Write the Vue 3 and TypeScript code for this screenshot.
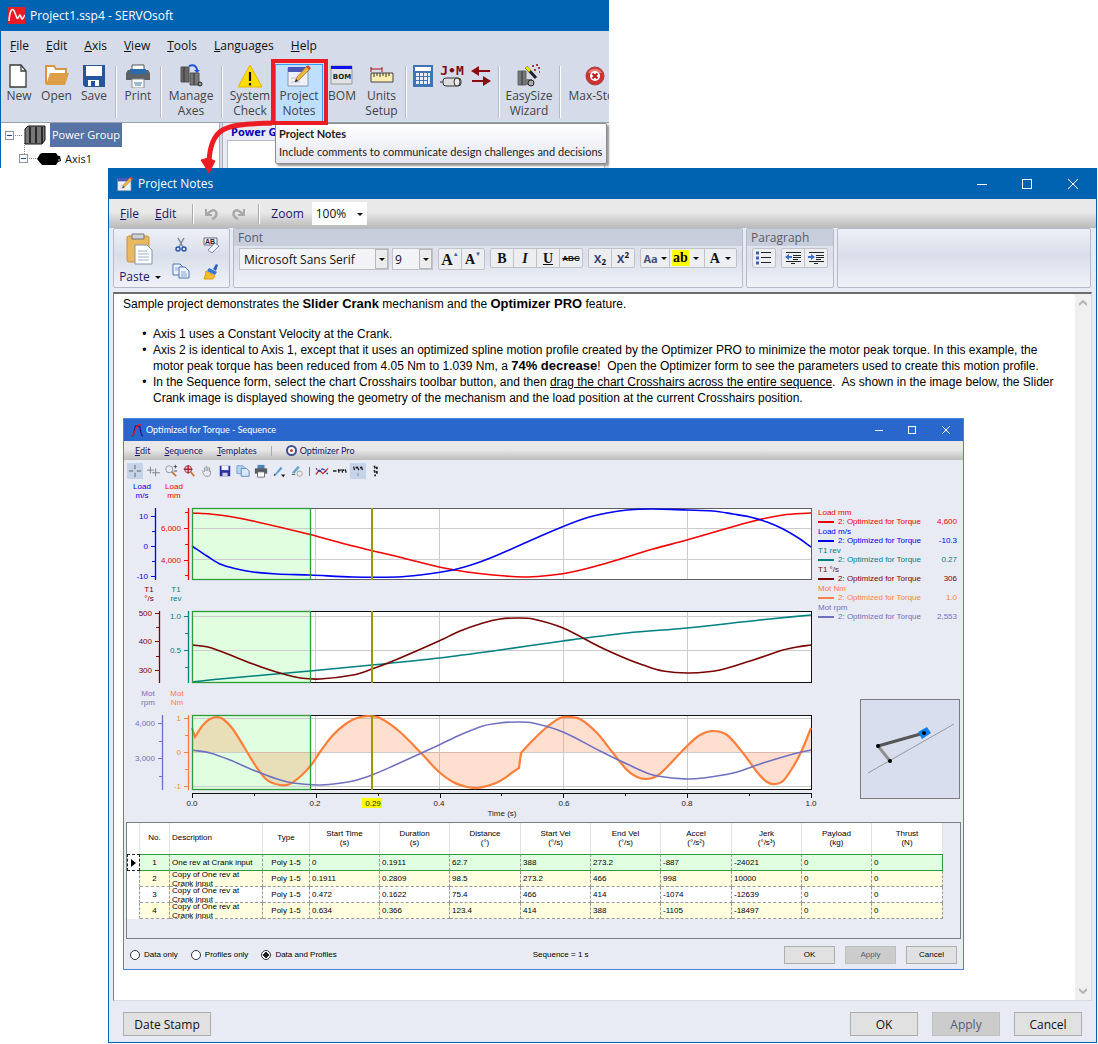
<script setup lang="ts">
import { ref } from 'vue'

interface Tool { label: string[]; icon: string; width: number; sep?: boolean; active?: boolean }
interface Axis { x: number; top: number; bottom: number; color: string; title: [string, string]; titleX: number; ticks: [number, string][] }
type Point = [number, number]

const notesIcon = '<path d="M1 4h20v18H1z" fill="#eef1f8" stroke="#8d93a8"/><path d="M1 3h20v5H1z" fill="#4c55b8"/><path d="M4 18h9M4 14h6" stroke="#b9c0d4"/><path d="M8 18l2-5L20 2l3 3-11 11z" fill="#f0b63c" stroke="#8b7545" stroke-width="0.700"/><path d="M19 3l2-2 3 3-2 2z" fill="#d44a3a"/><path d="M8 18l1-3 2 2z" fill="#222"/>'

const tools: Tool[] = [
  { label: ['New'], width: 36, icon: '<path d="M3 1h11l5 6v16H3z" fill="#fff" stroke="#3b3b3b" stroke-width="1.300"/><path d="M14 1v6h5" fill="none" stroke="#3b3b3b" stroke-width="1.300"/>' },
  { label: ['Open'], width: 39, icon: '<path d="M1 20V2h8l2 3h10v4" fill="#fff" stroke="#d9963c" stroke-width="2"/><path d="M1 21L5 9h19l-4 12z" fill="#dc9f48"/>' },
  { label: ['Save'], width: 36, icon: '<path d="M1 1h22v22H3l-2-2z" fill="#24559d"/><path d="M4 2h16v10H4z" fill="#fff"/><path d="M6 16h11v6H6z" fill="#fff"/><path d="M9 17h4v5H9z" fill="#24559d"/>', sep: true },
  { label: ['Print'], width: 38, icon: '<path d="M6 1h12v5H6z" fill="#fff" stroke="#555"/><path d="M2 6h20l2 3v7H0V9z" fill="#5c6168"/><path d="M4 5h16v5H4z" fill="#2a6bab"/><path d="M6 15h12v9H6z" fill="#fff" stroke="#888"/><path d="M8 19h8M9 21h6" stroke="#3a76ae"/>', sep: true },
  { label: ['Manage', 'Axes'], width: 54, icon: '<path d="M2 3h8v15H2z" fill="#666" stroke="#555"/><path d="M5 3v15" stroke="#333"/><path d="M11 9h9v12h-9z" fill="#777" stroke="#555"/><path d="M15 9v12" stroke="#333"/><circle cx="21" cy="20" r="2" fill="#999" stroke="#222"/><path d="M10 2c6-2 8 1 8 5" fill="none" stroke="#1e50d8" stroke-width="2"/><path d="M15 6h6l-3 3z" fill="#1e50d8"/>', sep: true },
  { label: ['System', 'Check'], width: 50, icon: '<path d="M12 1l12 22H0z" fill="#ffdd00" stroke="#e2b900"/><path d="M12 8v9M12 19v2.500" stroke="#111" stroke-width="2.200"/>' },
  { label: ['Project', 'Notes'], width: 48, icon: notesIcon, active: true },
  { label: ['BOM'], width: 38, icon: '<path d="M1 2h21v18H1z" fill="#e2e2e2" stroke="#999"/><path d="M1 2h21v3H1z" fill="#1111f0"/><text x="12" y="15" text-anchor="middle" font-family="DejaVu Sans" font-weight="bold" font-size="7" fill="#222">BOM</text>' },
  { label: ['Units', 'Setup'], width: 41, icon: '<path d="M1 3v5M12 3v5M1 5h11" stroke="#a31414" fill="none"/><path d="M1 9h22v9H1z" fill="#fdeeb0" stroke="#444"/><path d="M4 9v4M7 9v3M10 9v4M13 9v3M16 9v4M19 9v3" stroke="#333"/>', sep: true },
  { label: [], width: 28, icon: '<path d="M2 1h20v22H2z" fill="#3f73b3"/><path d="M4 3h16v4H4z" fill="#fff"/><path d="M5 9h3v3H5zM9 9h3v3H9zM13 9h3v3h-3zM17 9h2v3h-2zM5 13h3v3H5zM9 13h3v3H9zM13 13h3v3h-3zM17 13h2v7h-2zM5 17h3v3H5zM9 17h3v3H9zM13 17h3v3h-3z" fill="#e6eefb"/>' },
  { label: [], width: 30, icon: '<text x="12" y="11" text-anchor="middle" font-family="DejaVu Sans Mono" font-weight="bold" font-size="13" fill="#7d0b12">J•M</text><rect x="3" y="14" width="18" height="8" rx="3" fill="#ddd" stroke="#333"/><ellipse cx="17" cy="18" rx="3" ry="4" fill="#eee" stroke="#333"/><path d="M0 18h3" stroke="#333"/>' },
  { label: [], width: 28, icon: '<path d="M2 7l8-5v4h11v2H10v4zM22 17l-8-5v4H3v2h11v4z" fill="#8a0c10"/>', sep: true },
  { label: ['EasySize', 'Wizard'], width: 54, icon: '<path d="M1 7h8v14H1z" fill="#777" stroke="#666"/><path d="M5 7v14" stroke="#333"/><path d="M9 15h6v6H9z" fill="#777"/><circle cx="14" cy="19" r="3" fill="#aaa" stroke="#222"/><path d="M9 3l10 11" stroke="#222" stroke-width="3"/><path d="M9 3l4 4" stroke="#f5e400" stroke-width="2.500"/><path d="M15 2h2M19 1h2M21 4h2M17 6h2M22 8h1" stroke="#8a1010" stroke-width="1.500"/>', sep: true },
  { label: ['Max-Stop'], width: 64, icon: '<circle cx="12" cy="12" r="9" fill="#cf3030" stroke="#a04040"/><path d="M5 9a8 8 0 0 1 14 0z" fill="#ea7b74"/><circle cx="12" cy="12" r="5" fill="#fff"/><path d="M9.500 9.500l5 5M14.500 9.500l-5 5" stroke="#b61f1f" stroke-width="2.200"/>' },
]

const menus = ['File', 'Edit', 'Axis', 'View', 'Tools', 'Languages', 'Help']

const seqTools: { icon: string; name: string; on?: boolean; bar?: boolean }[] = [
  { name: 'Crosshairs', on: true, icon: '<path d="M8 1v5M8 10v5M1 8h5M10 8h5" stroke="#555"/>' },
  { name: 'Double crosshairs', icon: '<path d="M5 3v8M1 7h8M11 5v9M7 10h9" stroke="#777"/>' },
  { name: 'Zoom', icon: '<circle cx="6" cy="6" r="4" fill="#e5edf7" stroke="#8490a3"/><path d="M9 9l5 5" stroke="#c6742c" stroke-width="2"/><path d="M11 3h4M13 1v4M11 8h4" stroke="#444"/>' },
  { name: 'Zoom to fit', icon: '<circle cx="7" cy="6" r="4" fill="#ecd5dc" stroke="#9b2431"/><path d="M10 9l4 5" stroke="#c6742c" stroke-width="2"/><path d="M7 1v10M2 6h10" stroke="#b01f2c" stroke-width="1.500"/>' },
  { name: 'Pan', icon: '<path d="M4 9L2 7M5 9V4M7 8V2M9 8V3M11 9V4M3 9c1 4 3 5 4 5h3c2 0 2-3 2-6" fill="none" stroke="#8b8b8b"/>' },
  { name: 'Save', icon: '<path d="M2 2h12v12H2z" fill="#2b2fa5"/><path d="M4 2h8v5H4z" fill="#f3f3ff"/><path d="M5 10h6v4H5z" fill="#ccd"/>' },
  { name: 'Copy', icon: '<path d="M1 2h7l2 2v7H1z" fill="#b8d2f0" stroke="#6f9ccc"/><path d="M6 5h6l3 3v6H6z" fill="#dce8f8" stroke="#4f80ba"/>' },
  { name: 'Print', icon: '<path d="M4 1h8v5H4z" fill="#4a86bd"/><path d="M1 5h14v6H1z" fill="#555b63"/><path d="M4 9h8v6H4z" fill="#fff" stroke="#666"/>' },
  { name: 'Line', icon: '<path d="M2 13L10 3l2 2-8 8z" fill="#5c9bd1"/><path d="M2 13l1-2 1 2z" fill="#222"/><path d="M10 12h5l-2 3z" fill="#222"/>' },
  { name: 'Fill', icon: '<path d="M2 10L9 2l2 2-6 7z" fill="#6aa3d2"/><path d="M2 12h4" stroke="#555"/><circle cx="11" cy="11" r="3" fill="#eee" stroke="#999"/>', bar: true },
  { name: 'Curves', icon: '<path d="M1 12l4-5 4 4 6-6" fill="none" stroke="#d02222" stroke-width="1.500"/><path d="M1 5l4 4 4-4 6 7" fill="none" stroke="#2030a0" stroke-dasharray="2 1" stroke-width="1.500"/>' },
  { name: 'Join', icon: '<path d="M0 8h4M6 6l1 4M8 6v2M10 6l1 4M12 6v2M14 6l1 4" fill="none" stroke="#222" stroke-width="1.500"/>' },
  { name: 'Split', on: true, icon: '<path d="M3 3l1 4M6 3v2M7 3l2 4M11 3v2M12 3l1 4" fill="none" stroke="#222" stroke-width="1.500"/><path d="M8 10v4" stroke="#888"/>' },
  { name: 'Stack', icon: '<path d="M6 2l1 3M9 3v3M6 7l1 3M9 8v3M7 12v2" fill="none" stroke="#222" stroke-width="2"/>' },
]

const axes: Axis[] = [
  { x: 155, top: 508, bottom: 579, color: '#0000f0', title: ['Load', 'm/s'], titleX: 142, ticks: [[516, '10'], [531, ''], [546, '0'], [561, ''], [576, '-10']] },
  { x: 188, top: 508, bottom: 579, color: '#f00000', title: ['Load', 'mm'], titleX: 174, ticks: [[512, ''], [528, '6,000'], [544, ''], [560, '4,000'], [575, '']] },
  { x: 159, top: 611, bottom: 682, color: '#800000', title: ['T1', '°/s'], titleX: 149, ticks: [[613, '500'], [627, ''], [641, '400'], [656, ''], [670, '300']] },
  { x: 188, top: 611, bottom: 682, color: '#008080', title: ['T1', 'rev'], titleX: 176, ticks: [[616, '1.0'], [633, ''], [650, '0.5'], [667, '']] },
  { x: 162, top: 715, bottom: 789, color: '#7070c0', title: ['Mot', 'rpm'], titleX: 148, ticks: [[723, '4,000'], [741, ''], [758, '3,000'], [776, '']] },
  { x: 188, top: 715, bottom: 789, color: '#ff7f40', title: ['Mot', 'Nm'], titleX: 177, ticks: [[718, '1'], [735, ''], [752, '0'], [769, ''], [786, '-1']] },
]

const plots = [
  { top: 508, height: 71, edge: '#606060', lines: [528, 559] },
  { top: 611, height: 71, edge: '#101010', lines: [616, 650] },
  { top: 715, height: 74, edge: '#101010', lines: [718, 752, 786] },
]

const torquePts: Point[] = [[195, 737], [203, 725], [210, 719], [217, 717], [223, 719], [232, 728], [243, 745], [255, 765], [267, 780], [280, 785], [290, 784], [302, 775], [312, 764], [320, 752], [333, 735], [347, 723], [357, 718], [368, 716], [380, 718], [400, 732], [421, 753], [439, 772], [453, 782], [467, 787], [477, 788], [487, 786], [500, 781], [513, 772], [519, 768]]
const torquePts2: Point[] = [[521, 753], [533, 740], [547, 727], [560, 718], [570, 717], [580, 719], [597, 733], [613, 753], [627, 770], [637, 777], [647, 779], [657, 776], [670, 764], [687, 746], [700, 735], [713, 731], [727, 735], [743, 753], [757, 772], [767, 782], [775, 784], [783, 781], [793, 767], [802, 750], [811, 728]]

const curves: { color: string; pts: Point[] }[] = [
  { color: '#f40000', pts: [[192, 513], [210, 514], [227, 516], [253, 521], [308, 534], [353, 546], [403, 558], [439, 567], [467, 572], [493, 575], [523, 577], [543, 576], [567, 573], [600, 565], [653, 549], [687, 540], [750, 522], [783, 515], [811, 513]] },
  { color: '#0000f4', pts: [[192, 546], [207, 556], [220, 564], [237, 569], [253, 572], [277, 574], [310, 575], [353, 577], [397, 577], [420, 575], [453, 570], [477, 563], [500, 554], [550, 532], [583, 519], [607, 513], [627, 510], [652, 509], [687, 510], [713, 511], [733, 514], [750, 517], [767, 522], [783, 529], [800, 539], [811, 547]] },
  { color: '#008080', pts: [[192, 682], [220, 679], [310, 671], [372, 665], [439, 658], [500, 650], [563, 641], [627, 633], [687, 628], [760, 620], [811, 615]] },
  { color: '#780000', pts: [[192, 645], [208, 647], [220, 651], [253, 664], [270, 670], [287, 675], [300, 678], [320, 679], [353, 675], [372, 669], [393, 661], [439, 641], [460, 631], [483, 623], [500, 619], [517, 618], [533, 619], [563, 628], [600, 647], [627, 659], [643, 665], [663, 671], [690, 673], [720, 670], [750, 661], [783, 650], [797, 647], [811, 645]] },
  { color: '#7070c0', pts: [[192, 750], [210, 753], [230, 760], [253, 770], [277, 779], [293, 783], [317, 785], [333, 784], [353, 781], [372, 775], [393, 766], [439, 745], [460, 735], [483, 726], [500, 723], [517, 722], [533, 723], [563, 732], [600, 751], [627, 764], [653, 775], [687, 779], [703, 778], [733, 773], [763, 763], [797, 753], [811, 750]] },
]

// Cubic Hermite curve through unevenly spaced samples.
function smooth(pts: Point[], start = 'M'): string {
  const slopes = pts.map((_, i) => {
    const a = pts[Math.max(i - 1, 0)], b = pts[Math.min(i + 1, pts.length - 1)]
    return (b[1] - a[1]) / (b[0] - a[0])
  })
  let d = `${start}${pts[0][0]} ${pts[0][1]}`
  for (let i = 0; i < pts.length - 1; i++) {
    const b = pts[i], c = pts[i + 1], h = (c[0] - b[0]) / 3
    d += `C${b[0] + h} ${b[1] + slopes[i] * h} ${c[0] - h} ${c[1] - slopes[i + 1] * h} ${c[0]} ${c[1]}`
  }
  return d
}
const torque = 'M192 728' + smooth(torquePts, 'L') + smooth(torquePts2, 'L')

const legend = [
  { name: 'Load mm', value: '4,600', color: '#f00000' },
  { name: 'Load m/s', value: '-10.3', color: '#0000f0' },
  { name: 'T1 rev', value: '0.27', color: '#008080' },
  { name: 'T1 °/s', value: '306', color: '#800000' },
  { name: 'Mot Nm', value: '1.0', color: '#ff7f40' },
  { name: 'Mot rpm', value: '2,553', color: '#7070c0' },
]

const columns: [string, string, number][] = [
  ['', '', 13], ['No.', '', 30], ['Description', '', 93], ['Type', '', 47], ['Start Time', '(s)', 70], ['Duration', '(s)', 70],
  ['Distance', '(°)', 71], ['Start Vel', '(°/s)', 70], ['End Vel', '(°/s)', 70], ['Accel', '(°/s²)', 71], ['Jerk', '(°/s³)', 70],
  ['Payload', '(kg)', 70], ['Thrust', '(N)', 71],
]
const rows = [
  ['1', 'One rev at Crank input', 'Poly 1-5', '0', '0.1911', '62.7', '388', '273.2', '-887', '-24021', '0', '0'],
  ['2', 'Copy of One rev at Crank input', 'Poly 1-5', '0.1911', '0.2809', '98.5', '273.2', '466', '998', '10000', '0', '0'],
  ['3', 'Copy of One rev at Crank input', 'Poly 1-5', '0.472', '0.1622', '75.4', '466', '414', '-1074', '-12639', '0', '0'],
  ['4', 'Copy of One rev at Crank input', 'Poly 1-5', '0.634', '0.366', '123.4', '414', '388', '-1105', '-18497', '0', '0'],
]
const view = ref('Data and Profiles')
const views = ['Data only', 'Profiles only', 'Data and Profiles']
</script>

<template>
  <div class="page">
    <section class="app">
      <header class="bar">
        <svg width="17" height="17" viewBox="0 0 17 17"><path d="M0 0h17v17H0z" fill="#e81c24" /><path d="M1 14C2 1 5 0 7 6l2 5c1 2 2-3 3-3s1 4 2 4 2-3 3-4" fill="none" stroke="#fff" stroke-width="1.500" /></svg>
        <span>Project1.ssp4 - SERVOsoft</span>
      </header>
      <nav class="menus">
        <a v-for="m in menus" :key="m" href="#"><u>{{ m[0] }}</u>{{ m.slice(1) }}</a>
      </nav>
      <div class="tools">
        <template v-for="(t, i) in tools" :key="i">
          <button class="tool" :class="{ active: t.active }" :style="{ width: t.width + 'px' }" type="button">
            <svg width="24" height="24" viewBox="0 0 24 24" v-html="t.icon"></svg>
            <span v-for="l in t.label" :key="l">{{ l }}</span>
          </button>
          <i v-if="t.sep" class="sep"></i>
        </template>
      </div>
      <div class="work">
        <div class="tree">
          <div class="node">
            <svg width="49" height="24" viewBox="0 0 49 24"><rect x="4.500" y="8.500" width="8" height="8" fill="#fff" stroke="#8b93a3" /><path d="M6 12.500h5" stroke="#234a8c" /><path d="M14 12.500h8M23.500 20v4" stroke="#888" stroke-dasharray="1 1" /><path d="M24 6l3-3h17v14l-3 4H24z" fill="#777" stroke="#111" /><path d="M29 4v16M35 4v16M41 4v16" stroke="#111" stroke-width="1.500" /></svg>
            <span class="chosen">Power Group</span>
          </div>
          <div class="node">
            <svg width="62" height="24" viewBox="0 0 62 24"><path d="M23.500 0v7" stroke="#888" stroke-dasharray="1 1" /><rect x="18.500" y="7.500" width="8" height="8" fill="#fff" stroke="#8b93a3" /><path d="M20 11.500h5" stroke="#234a8c" /><path d="M28 11.500h8" stroke="#888" stroke-dasharray="1 1" /><path d="M36 12l3-5 2-1h14l2 3h2l1 5-3 1-2 3H41z" fill="#000" /><path d="M56 7l2 2M57 13h2" stroke="#ccc" /></svg>
            <span>Axis1</span>
          </div>
        </div>
        <div class="detail"><b>Power Group</b><div class="inner"></div></div>
      </div>
    </section>

    <section class="dialog">
      <header class="bar">
        <svg width="16" height="16" viewBox="0 0 24 24" v-html="notesIcon"></svg>
        <span class="grow">Project Notes</span>
        <svg class="caption" width="102" height="12" viewBox="0 0 102 12" fill="none" stroke="#fff"><path d="M0 6.500h10M91 1l10 10M101 1L91 11" /><rect x="45.500" y="1.500" width="9" height="9" /></svg>
      </header>
      <div class="strip">
        <a href="#"><u>F</u>ile</a><a href="#"><u>E</u>dit</a>
        <i class="sep tall"></i>
        <svg width="42" height="14" viewBox="0 0 42 14" fill="none" stroke="#a9a9a9" stroke-width="2.500"><path d="M2 7l4-3c6-3 8 5 1 8" /><path d="M1 2v6h6" stroke-width="2" /><path d="M38 7l-4-3c-6-3-8 5-1 8" /><path d="M39 2v6h-6" stroke-width="2" /></svg>
        <i class="sep tall"></i>
        <label for="zoom">Zoom</label>
        <span class="drop zoom"><select id="zoom"><option>100%</option></select><i class="tri"></i></span>
      </div>
      <div class="ribbon">
        <div class="group paste">
          <button type="button" class="big"><svg width="28" height="32" viewBox="0 0 28 32"><rect x="1" y="3" width="22" height="26" rx="2" fill="#e9b960" stroke="#c8933c" /><path d="M6 1h12v5H6z" fill="#cfd2d6" stroke="#777" /><path d="M9 12h12l5 5v14H9z" fill="#fff" stroke="#7f93b5" /><path d="M12 18h9M12 21h11M12 24h11M12 27h11" stroke="#9db1cf" /></svg><span>Paste <i class="tri"></i></span></button>
          <div class="minis">
            <svg width="16" height="16" viewBox="0 0 16 16"><path d="M5 1l5 9M11 1L6 10" stroke="#7d879a" stroke-width="1.500" /><circle cx="5" cy="12" r="2" fill="none" stroke="#2a55a8" stroke-width="1.500" /><circle cx="11" cy="12" r="2" fill="none" stroke="#2a55a8" stroke-width="1.500" /></svg>
            <svg width="17" height="17" viewBox="0 0 17 17"><path d="M1 1h13v7H1z" fill="#fff" stroke="#667" /><text x="7" y="7" text-anchor="middle" font-family="Liberation Sans" font-size="7" font-weight="bold" fill="#223">AB</text><path d="M5 13l7-7 4 3-7 7z" fill="#f2f4f9" stroke="#7e8cab" /></svg>
            <svg width="18" height="16" viewBox="0 0 18 16"><path d="M1 1h7l3 3v8H1z" fill="#eef3fc" stroke="#4a72b4" /><path d="M7 4h6l4 4v7H7z" fill="#eef3fc" stroke="#4a72b4" /><path d="M3 5h4M3 7h3M9 9h5M9 11h6M9 13h6" stroke="#86a5d4" /></svg>
            <svg width="16" height="17" viewBox="0 0 16 17"><path d="M10 6l3-5 2 1-2 6z" fill="#2b62c8" /><path d="M6 5l8 4-2 3-8-4z" fill="#3674d8" /><path d="M3 8l9 5-2 3H1l1-3z" fill="#f3bd2b" stroke="#d9a01f" /></svg>
          </div>
        </div>
        <div class="group font">
          <h3>Font</h3>
          <div class="row">
            <span class="drop face"><select aria-label="Font face"><option>Microsoft Sans Serif</option></select><i class="knob"><i class="tri"></i></i></span>
            <span class="drop size"><select aria-label="Font size"><option>9</option></select><i class="knob"><i class="tri"></i></i></span>
            <span class="set grow-set"><button type="button" class="serif l">A<sup>▲</sup></button><button type="button" class="serif">A<sup>▼</sup></button></span>
            <span class="set"><button type="button" class="serif"><b>B</b></button><button type="button" class="serif"><i>I</i></button><button type="button" class="serif"><u>U</u></button><button type="button" class="strike"><s>ABC</s></button></span>
            <span class="set"><button type="button" class="xx">X<sub>2</sub></button><button type="button" class="xx">X<sup>2</sup></button></span>
            <span class="set wide"><button type="button" class="aa">Aa <i class="tri"></i></button><button type="button" class="serif"><mark>ab</mark><i class="tri"></i></button><button type="button" class="serif"> A <i class="tri"></i></button></span>
          </div>
        </div>
        <div class="group para">
          <h3>Paragraph</h3>
          <div class="row">
            <span class="set"><button type="button" aria-label="Bullets"><svg width="16" height="14" viewBox="0 0 16 14"><path d="M5 1.500h10M5 6.500h10M5 11.500h10" stroke="#222" /><path d="M0 2h3M0 7h3M0 12h3" stroke="#3d62ae" stroke-width="3" /></svg></button></span>
            <span class="set"><button type="button" aria-label="Decrease indent"><svg width="17" height="14" viewBox="0 0 17 14"><path d="M1 1.500h15M8 4.500h8M8 6.500h8M8 8.500h5M1 10.500h15M6 12.500h4" stroke="#222" /><path d="M0 6l4-3v2h3v2H4v2z" fill="#3b6fd0" /></svg></button><button type="button" aria-label="Increase indent"><svg width="17" height="14" viewBox="0 0 17 14"><path d="M1 1.500h15M8 4.500h8M8 6.500h8M8 8.500h5M1 10.500h15M6 12.500h4" stroke="#222" /><path d="M7 6L3 3v2H0v2h3v2z" fill="#3b6fd0" /></svg></button></span>
          </div>
        </div>
        <div class="group rest"></div>
      </div>

      <div class="editor">
        <div class="doc">
          <p>Sample project demonstrates the <b>Slider Crank</b> mechanism and the <b>Optimizer PRO</b> feature.</p>
          <ul>
            <li>Axis 1 uses a Constant Velocity at the Crank.</li>
            <li>Axis 2 is identical to Axis 1, except that it uses an optimized spline motion profile created by the Optimizer PRO to minimize the motor peak torque. In this example, the<br>motor peak torque has been reduced from 4.05 Nm to 1.039 Nm, a <b>74% decrease</b>!&nbsp; Open the Optimizer form to see the parameters used to create this motion profile.</li>
            <li>In the Sequence form, select the chart Crosshairs toolbar button, and then <u>drag the chart Crosshairs across the entire sequence</u>.&nbsp; As shown in the image below, the Slider<br>Crank image is displayed showing the geometry of the mechanism and the load position at the current Crosshairs position.</li>
          </ul>

          <section class="seq">
            <header class="seq-bar">
              <svg width="13" height="13" viewBox="0 0 13 13" fill="none" stroke-width="1.300"><path d="M2 12c3 0 2-10 4-10h3c2 0 1 10 4 10" stroke="#131a8c" /><path d="M1 12c4 0 4-11 8-11h2" stroke="#e01c24" /></svg>
              <span class="grow">Optimized for Torque - Sequence</span>
              <svg width="76" height="10" viewBox="0 0 76 10" fill="none" stroke="#fff"><path d="M0 5.500h8M67 1l8 8M75 1l-8 8" /><rect x="33.500" y="1.500" width="7" height="7" /></svg>
            </header>
            <nav class="seq-menu">
              <a href="#"><u>E</u>dit</a><a href="#"><u>S</u>equence</a><a href="#"><u>T</u>emplates</a><i></i>
              <a href="#" class="pro"><svg width="11" height="11" viewBox="0 0 11 11"><circle cx="5.500" cy="5.500" r="4.500" fill="#fff" stroke="#3c4f92" stroke-width="2" /><circle cx="5.500" cy="5.500" r="1.500" fill="#d8342a" /></svg>Optimizer Pro</a>
            </nav>
            <div class="seq-tools">
              <template v-for="t in seqTools" :key="t.name">
                <button type="button" :class="{ on: t.on }" :aria-label="t.name"><svg width="14" height="14" viewBox="0 0 16 16" v-html="t.icon"></svg></button>
                <i v-if="t.bar"></i>
              </template>
            </div>
            <div class="charts">
              <svg class="chart" width="691" height="340" viewBox="124 482 691 340">
                <g v-for="p in plots" :key="p.top">
                  <rect x="192" :y="p.top" width="619" :height="p.height" fill="#fff" />
                  <rect x="192" :y="p.top" width="118" :height="p.height" fill="#e0ffe0" />
                  <path v-for="y in p.lines" :key="y" :d="`M192 ${y}.500H811`" stroke="#cccccc" />
                  <path v-for="x in [315, 439, 563, 687]" :key="x" :d="`M${x}.500 ${p.top}v${p.height}`" stroke="#cccccc" />
                  <rect x="192.500" :y="p.top + 0.5" width="619" :height="p.height" fill="none" :stroke="p.edge" />
                </g>
                <path :d="torque + 'V752H192z'" fill="#ff7f40" fill-opacity="0.250" />
                <path :d="torque" fill="none" stroke="#ff7f3a" stroke-width="2.200" />
                <path v-for="c in curves" :key="c.color" :d="smooth(c.pts)" fill="none" :stroke="c.color" stroke-width="1.600" />
                <g v-for="p in plots" :key="p.top">
                  <rect x="192.500" :y="p.top + 0.5" width="118" :height="p.height" fill="none" stroke="#2f9a3a" stroke-width="1.300" />
                  <path :d="`M372 ${p.top}v${p.height + 1}`" stroke="#999900" stroke-width="2" />
                </g>
                <g v-for="a in axes" :key="a.color" :fill="a.color">
                  <path :d="`M${a.x}.500 ${a.top}V${a.bottom + 1}`" :stroke="a.color" stroke-width="1.300" />
                  <template v-for="t in a.ticks" :key="t[0]">
                    <path :d="`M${a.x - (t[1] ? 4 : 3)} ${t[0]}.500h4`" :stroke="a.color" />
                    <text :x="a.x - 7" :y="t[0] + 3" text-anchor="end">{{ t[1] }}</text>
                  </template>
                  <text :x="a.titleX" :y="a.top - 19" text-anchor="middle">{{ a.title[0] }}</text>
                  <text :x="a.titleX" :y="a.top - 10" text-anchor="middle">{{ a.title[1] }}</text>
                </g>
                <path d="M192 793.500H812" stroke="#111" />
                <path v-for="n in 11" :key="n" :d="`M${130.5 + Math.round(61.9 * n)} 793v${n % 2 ? 5 : 3}`" stroke="#111" />
                <rect x="362" y="798" width="20" height="10" fill="#ffff00" />
                <g text-anchor="middle" fill="#222">
                  <text x="192" y="806">0.0</text><text x="315" y="806">0.2</text><text x="373" y="806">0.29</text><text x="439" y="806">0.4</text>
                  <text x="564" y="806">0.6</text><text x="687" y="806">0.8</text><text x="811" y="806">1.0</text><text x="502" y="816">Time (s)</text>
                </g>
              </svg>
              <div class="side">
                <dl>
                  <template v-for="l in legend" :key="l.name">
                    <dt :style="{ color: l.color }">{{ l.name }}</dt>
                    <dd :style="{ color: l.color }"><i></i><span>2: Optimized for Torque</span><span>{{ l.value }}</span></dd>
                  </template>
                </dl>
                <svg class="mech" width="100" height="100" viewBox="0 0 100 100"><rect x="0.500" y="0.500" width="99" height="99" fill="#d8deed" stroke="#7b7b82" /><path d="M8 74l86-49" stroke="#999" /><path d="M30 62L18 47" stroke="#909090" stroke-width="3" /><path d="M18 47l46-13" stroke="#555" stroke-width="3" /><path d="M58 33l9-5 4 6-9 6z" fill="#0a80f0" /><circle cx="30" cy="62" r="2" /><circle cx="18" cy="47" r="2" /><circle cx="64" cy="34" r="2" /></svg>
              </div>
            </div>
            <div class="grid">
              <table>
                <colgroup><col v-for="c in columns" :key="c[0]" :style="{ width: c[2] + 'px' }"></colgroup>
                <thead><tr><th v-for="c in columns" :key="c[0]" :class="{ left: c[0] === 'Description' }">{{ c[0] }}<template v-if="c[1]"><br>{{ c[1] }}</template></th></tr></thead>
                <tbody>
                  <tr v-for="(r, i) in rows" :key="i" :class="{ current: i === 0, tint: i % 2 }">
                    <td class="mark"><svg v-if="i === 0" width="6" height="8" viewBox="0 0 6 8"><path d="M0 0l5 4-5 4z" /></svg></td>
                    <td v-for="(v, j) in r" :key="j" :class="{ mid: j === 0 || j === 2 }"><div>{{ v }}</div></td>
                  </tr>
                </tbody>
              </table>
            </div>
            <footer class="seq-foot">
              <label v-for="v in views" :key="v"><input v-model="view" type="radio" name="view" :value="v">{{ v }}</label>
              <output>Sequence = 1 s</output>
              <span class="acts"><button type="button">OK</button><button type="button" disabled>Apply</button><button type="button">Cancel</button></span>
            </footer>
          </section>
        </div>
        <div class="scroll">
          <svg width="8" height="6" viewBox="0 0 8 6"><path d="M0 5l4-4 4 4" fill="none" stroke="#b5b5b5" stroke-width="2" /></svg>
          <svg width="8" height="6" viewBox="0 0 8 6"><path d="M0 1l4 4 4-4" fill="none" stroke="#b5b5b5" stroke-width="2" /></svg>
        </div>
      </div>
      <footer class="foot"><button type="button" class="stamp">Date Stamp</button><span class="grow"></span><button type="button">OK</button><button type="button" disabled>Apply</button><button type="button">Cancel</button></footer>
    </section>

    <div class="tip" role="tooltip"><b>Project Notes</b><span>Include comments to communicate design challenges and decisions</span></div>
    <div class="frame"></div>
    <svg class="arrow" width="76" height="56" viewBox="0 0 76 56"><path d="M72 4C30 6 10 4 9 44" fill="none" stroke="#ed1c24" stroke-width="5" /><path d="M1 41l7-2 7 3-6 12z" fill="#ed1c24" stroke="#ed1c24" stroke-width="1" /></svg>
  </div>
</template>

<style>
body { background: #fff; }
</style>

<style scoped>
* { box-sizing: border-box; }
.page { position: relative; font: 12px/15px "Open Sans", "Noto Sans", sans-serif; color: #111; }
button { font: inherit; color: inherit; border: 0; padding: 0; margin: 0; background: none; }
a { color: inherit; text-decoration: none; }
.grow { flex: 1; }
.bar { display: flex; align-items: center; height: 31px; padding: 0 8px; gap: 5px; background: #0063b1; color: #fff; }

.app { width: 100%; max-width: 609px; height: 168px; overflow: hidden; border-left: 1px solid #0063b1; background: #d6dbe9; }
.app .bar { padding-left: 7px; }
.menus { display: flex; gap: 17px; padding: 7px 9px; white-space: nowrap; }
.tools { display: flex; height: 63px; padding-top: 4px; border-bottom: 1px solid #9b9fa8; }
.tool { display: flex; flex: none; flex-direction: column; align-items: center; white-space: nowrap; color: #444; height: 58px; }
.tool span { line-height: 15px; }
.tool.active { background: #bfdfff; border: 1px solid #3399ff; }
.tool.active svg { margin-top: -1px; }
.sep { flex: none; box-sizing: content-box; width: 0; height: 52px; margin: 2px 2px 4px 3px; border-left: 1px solid #b5b9c4; border-right: 1px solid #fff; }
.work { display: flex; height: 60px; }
.tree { flex: 0 0 219px; background: #fff; border-right: 1px solid #a9aeb9; }
.node { display: flex; height: 24px; align-items: center; font-size: 11px; }
.node span { line-height: 24px; padding: 0 2px; }
.chosen { background: #5673a5; color: #fff; }
.detail { flex: 1; margin-left: 2px; padding: 1px 4px; background: #e8ebf3; border-left: 1px solid #a9aeb9; color: #0000b4; }
.detail b { display: block; padding-left: 4px; line-height: 16px; font-size: 11px; }
.detail .inner { height: 40px; background: #fff; border: 1px solid #b5bac4; }

.dialog { margin: 0 1px 0 108px; border: 1px solid #0063b1; border-top: 0; background: #e8ebf3; }
.dialog .bar { padding: 0 17px 0 8px; gap: 5px; }
.strip { display: flex; align-items: center; height: 29px; padding: 0 11px; background: linear-gradient(#e9e9e9 45%, #bababa); color: #1b1768; }
.strip a { margin-right: 16px; }
.sep.tall { height: 20px; margin: 0 11px 0 0; border-left-color: #aaa; }
.strip .sep + svg { margin-right: 11px; }
.drop { position: relative; display: flex; background: #f2f3f6; }
.drop select { appearance: none; flex: 1; width: 100%; border: 0; background: none; font: inherit; padding: 0 4px; color: #111; }
.tri { display: inline-block; width: 0; height: 0; border: 3px solid transparent; border-top-color: #111; border-bottom: 0; vertical-align: middle; }
.zoom { width: 55px; height: 23px; margin-left: 8px; background: #fff; }
.zoom .tri { position: absolute; right: 4px; top: 11px; }

.ribbon { display: flex; gap: 3px; padding: 0 5px 4px 4px; }
.group { height: 60px; border: 1px solid #b4bac8; border-radius: 2px; background: linear-gradient(#eef0f6, #d9deea 45%, #f0f2f8); }
.group h3 { margin: 0; height: 17px; padding: 0 4px; background: #c8cddb; color: #5a5d66; font-weight: 400; line-height: 18px; font-size: 12px; }
.paste { flex: 0 0 117px; display: flex; }
.big { display: flex; flex-direction: column; align-items: center; gap: 3px; width: 52px; padding-top: 4px; color: #1b1768; }
.big span { white-space: nowrap; line-height: 18px; }
.big .tri { margin-left: 2px; }
.minis { display: grid; grid-template-columns: 30px 30px; grid-template-rows: 26px 26px; justify-items: center; align-items: center; padding-top: 3px; }
.font { flex: 0 0 509px; }
.para { flex: 0 0 85px; }
.rest { flex: 1; }
.row { display: flex; align-items: flex-start; gap: 5px; padding: 2px 5px; }
.drop.face { width: 150px; height: 22px; border: 1px solid #c0c2c6; margin-right: -2px; }
.drop.size { width: 41px; height: 22px; border: 1px solid #c0c2c6; }
.drop.size select { padding: 0 2px; }
.knob { display: flex; flex: 0 0 13px; align-items: center; justify-content: center; border: 1px solid #b5b7ba; background: #ececec; }
.set { display: flex; border: 1px solid #c0c2c6; border-radius: 2px; background: #eceef2; height: 20px; }
.set button { width: 23px; border-left: 1px solid #c0c2c6; display: flex; align-items: center; justify-content: center; white-space: pre; overflow: hidden; }
.set button:first-child { width: 22px; border-left: 0; }
.grow-set { height: 22px; }
.serif { font-family: "Liberation Serif", serif; font-weight: 700; font-size: 14px; }
.serif.l { font-size: 16px; }
.serif sup { font-size: 6px; line-height: 6px; align-self: flex-start; color: #3c5ea8; margin-top: 2px; }
.strike { font: 700 8px "Liberation Sans", sans-serif; }
.xx { color: #2d3a72; font-weight: 700; font-size: 11px; }
.xx sub, .xx sup { font-size: 8px; line-height: 8px; color: #111; }
.xx sub { margin-top: 7px; }
.xx sup { margin-bottom: 7px; }
.wide button:first-child { width: 28px; }
.wide button:nth-child(2) { width: 35px; }
.wide button:nth-child(3) { width: 32px; }
.wide button:nth-child(n+2) { justify-content: space-between; padding: 0 5px 0 2px; }
.aa { color: #454f7e; font-weight: 700; font-size: 11px; }
.serif mark { background: #ffff00; width: 17px; line-height: 16px; text-align: center; }

.editor { display: flex; margin: 0 4px; border: 1px solid #d8dade; border-top: 2px solid #6c6c6c; border-left: 1px solid #808080; background: #fff; }
.doc { flex: 1; min-width: 0; padding: 2px 0 30px 9px; font: 12px/16px "Liberation Sans", Arial, sans-serif; color: #000; white-space: nowrap; }
.doc b { font-size: 13px; line-height: 15px; }
.doc p { margin: 0 0 14px; }
.doc ul { margin: 0 0 12px; padding-left: 30px; list-style-type: "•  "; }
.scroll { flex: 0 0 16px; display: flex; flex-direction: column; justify-content: space-between; align-items: center; padding: 6px 0; background: #f0f0f0; }

.seq { width: 841px; border: 1px solid #4a84d8; background: #e8ebf3; }
.seq-bar { display: flex; align-items: center; gap: 3px; height: 22px; padding: 0 12px 0 6px; background: #2a67cd; color: #fff; font: 9px/12px Lato, sans-serif; }
.seq-menu { display: flex; align-items: center; height: 19px; gap: 14px; padding: 0 11px; background: linear-gradient(#e8e8e8 45%, #bcbcbc); color: #1b1768; font: 9px/12px Lato, sans-serif; }
.seq-menu i { width: 1px; height: 10px; background: #aaa; }
.seq-menu .pro { display: flex; align-items: center; gap: 3px; }
.seq-tools { display: flex; align-items: center; height: 22px; padding: 0 3px; gap: 2px; }
.seq-tools button { display: flex; align-items: center; justify-content: center; width: 16px; height: 16px; }
.seq-tools .on { background: #c6d4ea; }
.seq-tools i { width: 1px; height: 9px; background: #777; margin: 0 2px; }
.charts { display: flex; font: 8px/10px "Liberation Sans", Arial, sans-serif; }
.chart { flex: none; overflow: visible; }
.side { flex: 1; padding: 26px 3px 0; }
.side dl { margin: 0; }
.side dt { line-height: 9px; }
.side dd { display: flex; align-items: center; margin: 0 3px 0 0; line-height: 10px; }
.side dd i { width: 16px; height: 2px; background: currentColor; margin-right: 4px; }
.side dd span:last-child { margin-left: auto; }
.mech { display: block; margin: 77px 0 0 auto; }
.grid { height: 117px; margin: 0 2px; border: 1px solid #7b7f88; }
table { table-layout: fixed; width: 816px; border-collapse: separate; border-spacing: 0; font: 8px/9px "Liberation Sans", Arial, sans-serif; }
th { height: 31px; padding: 0 0 2px; background: #fff; border-right: 1px solid #e2e2e2; font-weight: 400; text-align: center; }
th.left { text-align: left; padding-left: 2px; }
td { height: 16px; padding: 0 2px; border-right: 1px dashed #999; border-bottom: 1px dashed #999; background: #fff; vertical-align: middle; }
td div { display: flex; align-items: center; height: 15px; overflow: hidden; white-space: normal; }
.mid div { justify-content: center; }
.tint td { background: #ffffe0; }
.current td { background: #e0ffe0; border-top: 1px solid #2f9a3a; border-bottom: 1px solid #2f9a3a; }
.current td:last-child { border-right: 1px solid #2f9a3a; }
td.mark, .tint td.mark { background: #fff; border-bottom-color: transparent; padding: 0 4px; }
.current td.mark { background: #fff; border: 1px dashed #222; padding: 0 3px; }
.mark svg { display: block; }
.seq-foot { display: flex; align-items: center; height: 30px; padding: 1px 6px 0; font: 8px/10px "Liberation Sans", Arial, sans-serif; }
.seq-foot label { display: flex; align-items: center; gap: 4px; margin-right: 13px; }
.seq-foot input { appearance: none; width: 10px; height: 10px; margin: 0; border: 1px solid #333; border-radius: 50%; background: #fff; }
.seq-foot input:checked { background: radial-gradient(#222 45%, #fff 50%); }
.seq-foot output { margin-left: 183px; }
.acts { display: flex; gap: 10px; margin-left: auto; }
.acts button { width: 51px; height: 18px; background: #e1e1e1; border: 1px solid #adadad; }

.foot { display: flex; gap: 14px; padding: 11px 14px 6px; }
.foot button { width: 68px; height: 24px; border: 1px solid #adadad; background: #e1e1e1; }
.foot .stamp { width: 88px; }
.foot button:disabled, .acts button:disabled { background: #cccccc; border-color: #bfbfbf; color: #555c78; }

.tip { position: absolute; left: 275px; top: 123px; width: 332px; height: 41px; padding: 3px; display: flex; flex-direction: column; gap: 4px; background: linear-gradient(#fff, #e5e6f1); border: 1px solid #8c8c8c; border-radius: 2px; box-shadow: 2px 2px 2px #999; font: 11px/14px Lato, sans-serif; color: #222; white-space: nowrap; }
.frame { position: absolute; left: 271px; top: 59px; width: 57px; height: 66px; border: 4px solid #ed1c24; }
.arrow { position: absolute; left: 200px; top: 119px; }
</style>
